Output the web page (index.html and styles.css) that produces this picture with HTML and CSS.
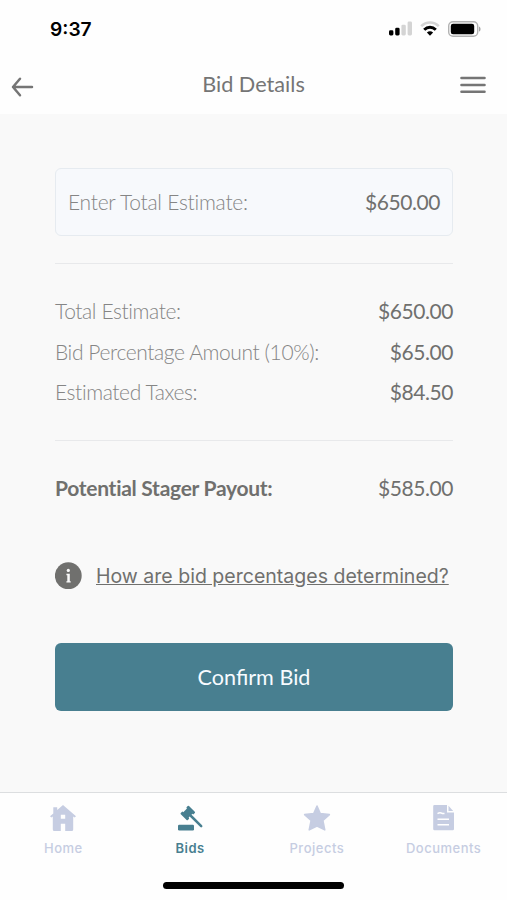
FILE: index.html
```html
<!DOCTYPE html>
<html lang="en">
<head>
    <meta charset="UTF-8" />
    <meta name="viewport" content="width=device-width, initial-scale=1.0" />
    <title>Bid Details</title>
    <link rel="stylesheet" href="styles.css">
</head>
<body>

<div class="status-bar">
    <span class="time">9:37</span>
    <div class="status-icons">
        <svg class="signal" width="23" height="15" viewBox="0 0 23 15">
            <rect x="0" y="9.3" width="4.4" height="5.2" rx="1.4" fill="#000" />
            <rect x="6.2" y="6.7" width="4.4" height="7.8" rx="1.4" fill="#000" />
            <rect x="12.4" y="3.7" width="4.4" height="10.8" rx="1.4" fill="#d4d4d4" />
            <rect x="18.6" y="0.4" width="4.4" height="14.1" rx="1.4" fill="#d4d4d4" />
        </svg>
        <svg class="wifi" width="20" height="15" viewBox="0 0 20 15">
            <path d="M1.2 5.2C6.2 0.2 13.8 0.2 18.8 5.2" fill="none" stroke="#d4d4d4" stroke-width="2.5" />
            <path d="M4.2 8.7C7.5 5.4 12.5 5.4 15.8 8.7" fill="none" stroke="#000" stroke-width="2.9" />
            <path d="M6.9 11.5C8.7 9.9 11.3 9.9 13.1 11.5L10 14.7Z" fill="#000" />
        </svg>
        <svg class="battery" width="33" height="16" viewBox="0 0 33 16">
            <rect x="0.7" y="0.7" width="29" height="14.6" rx="4.3" fill="#fff" stroke="#b2b2b2" stroke-width="1.4" />
            <rect x="2.8" y="2.7" width="23.4" height="10.6" rx="2.2" fill="#000" />
            <path d="M31 5.4C33 6.2 33 9.8 31 10.6Z" fill="#a5a5a5" />
        </svg>
    </div>
</div>

<header class="header">
    <svg class="back" width="24" height="22" viewBox="0 0 24 22">
        <path d="M9 2.8L2 11L9 19.2M2 11H21" fill="none" stroke="#757575" stroke-width="2.5" stroke-linecap="round" stroke-linejoin="round" />
    </svg>
    <h1>Bid Details</h1>
    <svg class="menu" width="26" height="18" viewBox="0 0 26 18">
        <path d="M1.5 2H24.5M1.5 9H24.5M1.5 15.7H24.5" stroke="#757575" stroke-width="2.6" stroke-linecap="round" />
    </svg>
</header>

<main>
    <div class="field">
        <span class="label">Enter Total Estimate:</span>
        <span class="amount">$650.00</span>
    </div>

    <div class="summary">
        <div class="row">
            <span class="label">Total Estimate:</span>
            <span class="amount">$650.00</span>
        </div>
        <div class="row">
            <span class="label">Bid Percentage Amount (10%):</span>
            <span class="amount">$65.00</span>
        </div>
        <div class="row">
            <span class="label">Estimated Taxes:</span>
            <span class="amount">$84.50</span>
        </div>
    </div>

    <div class="row payout">
        <span class="total">Potential Stager Payout:</span>
        <span class="amount">$585.00</span>
    </div>

    <div class="info">
        <svg width="27" height="28" viewBox="0 0 27 28">
            <circle cx="13.3" cy="13.7" r="13.4" fill="#70706e" />
            <circle cx="13.3" cy="8.4" r="1.6" fill="#f9f9f9" />
            <path d="M11.4 11.8H14.8V19.2H15.7V20.6H11.4V19.2H12.3V13.2H11.4Z" fill="#f9f9f9" />
        </svg>
        <a class="info-link">How are bid percentages determined?</a>
    </div>

    <button class="confirm-btn">Confirm Bid</button>
</main>

<nav class="tabs">
    <div class="tab">
        <svg width="28" height="28" viewBox="0 0 28 28">
            <path fill-rule="evenodd" d="M14 1L27 12.2L25.7 13.6L24.2 12.5V25.5Q24.2 27 22.7 27H16.2V19.8H11.8V27H5.3Q3.8 27 3.8 25.5V12.5L2.3 13.6L1 12.2L4.3 9.4V3.2H8.2V6ZM11.8 10.8V14.8H16.2V10.8Z" fill="currentColor" />
        </svg>
        <span>Home</span>
    </div>
    <div class="tab active">
        <svg width="28" height="28" viewBox="0 0 28 28">
            <rect x="2" y="20.7" width="16" height="5.7" rx="1.2" fill="currentColor" />
            <g transform="translate(11.8 9) rotate(-45)">
                <rect x="-4" y="-3.8" width="8" height="7.6" fill="currentColor" />
                <rect x="-5.8" y="-5" width="3.2" height="10" rx="0.9" fill="currentColor" />
                <rect x="2.6" y="-5" width="3.2" height="10" rx="0.9" fill="currentColor" />
            </g>
            <path d="M13 10L25.2 22.2" stroke="currentColor" stroke-width="2.5" stroke-linecap="round" />
        </svg>
        <span>Bids</span>
    </div>
    <div class="tab">
        <svg width="28" height="28" viewBox="0 0 28 28">
            <path d="M14 2L17.3 9.6L26.4 10.6L19.9 16.5L21.8 25.9L14 22L6.2 25.9L8.1 16.5L1.6 10.6L10.7 9.6Z" fill="currentColor" stroke="currentColor" stroke-width="1.5" stroke-linejoin="round" />
        </svg>
        <span>Projects</span>
    </div>
    <div class="tab">
        <svg width="28" height="28" viewBox="0 0 28 28">
            <path d="M4.5 1H17V8.5H24V25Q24 26.3 22.7 26.3H4.5Q3.2 26.3 3.2 25V2.3Q3.2 1 4.5 1Z" fill="currentColor" />
            <path d="M18.5 1.8L23.2 6.9H18.5Z" fill="currentColor" />
            <path d="M7.5 9.6Q10 8 12.5 9.6H14.5M7.5 15.3H19M7.5 20.8H19" fill="none" stroke="#fff" stroke-width="1.5" />
        </svg>
        <span>Documents</span>
    </div>
</nav>

<div class="home-indicator"></div>

</body>
</html>
```

FILE: styles.css
```css
* {
    margin: 0;
    padding: 0;
    box-sizing: border-box;
}
body {
    height: 900px;
    display: flex;
    flex-direction: column;
    background-color: #fefefe;
    font-family: Lato, sans-serif;
    font-size: 21px;
    color: #70706e;
    overflow: hidden;
}
svg {
    display: block;
    flex-shrink: 0;
}
.status-bar {
    height: 57px;
    padding: 0 26px 0 50px;
    display: flex;
    align-items: center;
    justify-content: space-between;
}
.time {
    font-family: Inter, sans-serif;
    font-size: 19.2px;
    font-weight: 600;
    color: #000;
}
.status-icons {
    display: flex;
    align-items: center;
    gap: 8px;
}
.header {
    height: 57px;
    padding: 0 21px 0 11px;
    display: grid;
    grid-template-columns: 60px 1fr 50px;
    align-items: center;
    justify-items: center;
}
.back {
    justify-self: start;
    margin-top: 3px;
}
.header h1 {
    padding-bottom: 3px;
    font-size: 21.7px;
    font-weight: 400;
    color: #757575;
}
.menu {
    justify-self: end;
    margin-bottom: 2px;
}
main {
    height: 678px;
    padding: 54px 54px 0 55px;
    background-color: #f9f9f9;
}
.field {
    height: 68px;
    padding: 0 12px 2px;
    display: flex;
    align-items: center;
    justify-content: space-between;
    background-color: #f7f9fc;
    border: 1.5px solid #e6ebf0;
    border-radius: 6px;
}
.label {
    font-weight: 300;
    letter-spacing: -0.4px;
    color: #858585;
}
.field .label {
    letter-spacing: -0.25px;
}
.amount {
    letter-spacing: -0.45px;
}
.summary {
    height: 178px;
    margin-top: 27px;
    padding-top: 26.5px;
    border-top: 1.5px solid #e8e9eb;
    border-bottom: 1.5px solid #e8e9eb;
}
.row {
    height: 40.5px;
    display: flex;
    align-items: center;
    justify-content: space-between;
}
.payout {
    margin-top: 26px;
}
.total {
    font-weight: 700;
    letter-spacing: -0.28px;
}
.info {
    height: 30px;
    margin-top: 53px;
    display: flex;
    align-items: center;
    gap: 14px;
}
.info-link {
    font-family: Inter, sans-serif;
    font-size: 19.55px;
    text-decoration: underline;
    white-space: nowrap;
}
.confirm-btn {
    width: 100%;
    height: 68px;
    margin-top: 52px;
    background-color: #487f90;
    border: none;
    border-radius: 6px;
    color: #f7fbff;
    font-family: inherit;
    font-size: 21.6px;
}
.tabs {
    height: 81px;
    padding-top: 11px;
    display: grid;
    grid-template-columns: repeat(4, 1fr);
    border-top: 1px solid #dcdee0;
}
.tab {
    display: flex;
    flex-direction: column;
    align-items: center;
    gap: 7px;
    color: #c6cde2;
    font-family: Inter, sans-serif;
    font-size: 13px;
    font-weight: 500;
    line-height: 18px;
    letter-spacing: 0.5px;
}
.tab.active {
    color: #487f90;
    font-weight: 600;
}
.home-indicator {
    width: 181px;
    height: 7px;
    margin: 9px auto 0;
    background-color: #000;
    border-radius: 4px;
}
```
